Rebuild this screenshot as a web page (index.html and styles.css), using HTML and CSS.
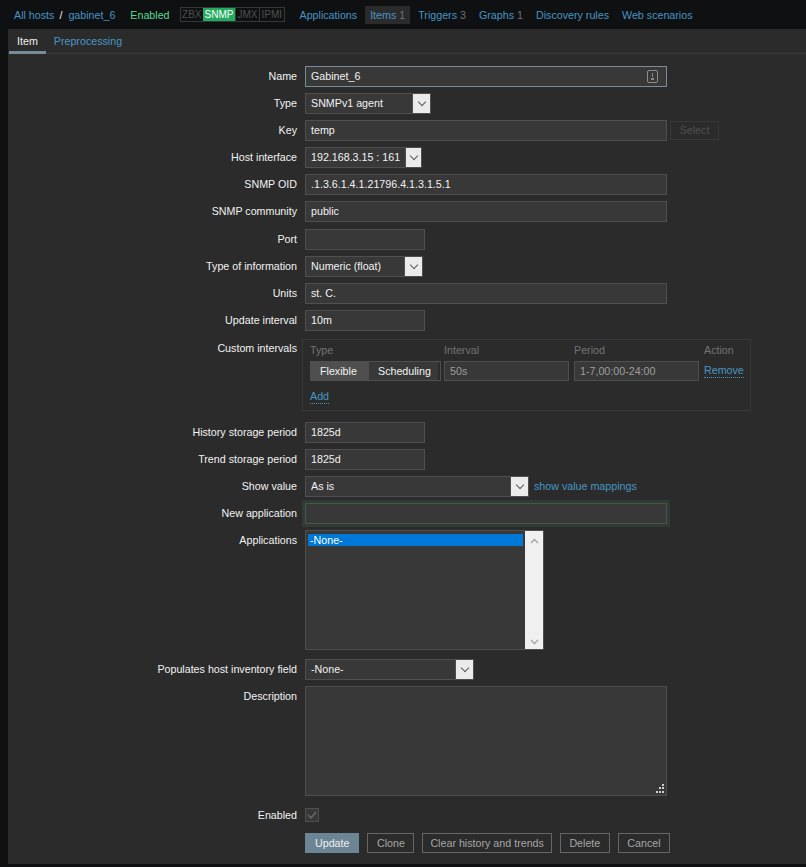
FILE: index.html
```html
<!DOCTYPE html>
<html lang="en">
<head>
    <meta charset="UTF-8">
    <meta name="viewport" content="width=device-width, initial-scale=1.0">
    <title>Configuration of items</title>
    <link rel="stylesheet" href="styles.css">
</head>
<body>
    <div class="host-nav">
        <a href="#" class="link">All hosts</a>
        <span class="sep">/</span>
        <a href="#" class="link">gabinet_6</a>
        <span class="status-on">Enabled</span>
        <span class="status-box">
            <span class="badge">ZBX</span><span class="badge badge-on">SNMP</span><span class="badge">JMX</span><span class="badge">IPMI</span>
        </span>
        <ul class="host-menu">
            <li><a href="#">Applications</a></li>
            <li class="selected"><a href="#">Items</a> <span class="count">1</span></li>
            <li><a href="#">Triggers</a> <span class="count">3</span></li>
            <li><a href="#">Graphs</a> <span class="count">1</span></li>
            <li><a href="#">Discovery rules</a></li>
            <li><a href="#">Web scenarios</a></li>
        </ul>
    </div>

    <div class="panel">
        <ul class="tabs">
            <li class="active">Item</li>
            <li><a href="#">Preprocessing</a></li>
        </ul>

        <form class="form-grid">
            <label>Name</label>
            <div class="field">
                <div class="input wide focused">Gabinet_6
                    <svg class="autofill" width="11" height="13" viewBox="0 0 11 13">
                        <rect x="0.5" y="0.5" width="10" height="12" rx="1.5" fill="none" stroke="#8c8c8c"/>
                        <rect x="5" y="3" width="1" height="4" fill="#8c8c8c"/>
                        <rect x="4" y="8" width="3" height="2" fill="#8c8c8c"/>
                    </svg>
                </div>
            </div>

            <label>Type</label>
            <div class="field">
                <div class="select w-type"><span class="val">SNMPv1 agent</span><span class="arrow"></span></div>
            </div>

            <label>Key</label>
            <div class="field">
                <div class="input wide">temp</div>
                <button type="button" class="btn-disabled">Select</button>
            </div>

            <label>Host interface</label>
            <div class="field">
                <div class="select w-iface"><span class="val">192.168.3.15 : 161</span><span class="arrow"></span></div>
            </div>

            <label>SNMP OID</label>
            <div class="field"><div class="input wide">.1.3.6.1.4.1.21796.4.1.3.1.5.1</div></div>

            <label>SNMP community</label>
            <div class="field"><div class="input wide">public</div></div>

            <label>Port</label>
            <div class="field"><div class="input small"></div></div>

            <label>Type of information</label>
            <div class="field">
                <div class="select w-info"><span class="val">Numeric (float)</span><span class="arrow"></span></div>
            </div>

            <label>Units</label>
            <div class="field"><div class="input wide">st. C.</div></div>

            <label>Update interval</label>
            <div class="field"><div class="input small">10m</div></div>

            <label class="top iv-label">Custom intervals</label>
            <div class="field">
                <div class="intervals">
                    <div class="iv-head">Type</div>
                    <div class="iv-head">Interval</div>
                    <div class="iv-head">Period</div>
                    <div class="iv-head">Action</div>

                    <div class="segmented">
                        <span class="seg active">Flexible</span><span class="seg">Scheduling</span>
                    </div>
                    <div class="input iv-input">50s</div>
                    <div class="input iv-input">1-7,00:00-24:00</div>
                    <a href="#" class="link dotted">Remove</a>

                    <a href="#" class="link dotted iv-add">Add</a>
                </div>
            </div>

            <label>History storage period</label>
            <div class="field"><div class="input small">1825d</div></div>

            <label>Trend storage period</label>
            <div class="field"><div class="input small">1825d</div></div>

            <label>Show value</label>
            <div class="field">
                <div class="select w-show"><span class="val">As is</span><span class="arrow"></span></div>
                <a href="#" class="link show-map">show value mappings</a>
            </div>

            <label>New application</label>
            <div class="field"><div class="input wide new-app"></div></div>

            <label class="top">Applications</label>
            <div class="field">
                <div class="listbox">
                    <div class="options">
                        <div class="option selected">-None-</div>
                    </div>
                    <div class="scrollbar">
                        <svg width="9" height="6" viewBox="0 0 9 6"><polyline points="1,5 4.5,1.5 8,5" fill="none" stroke="#a3a3a3" stroke-width="1.3"/></svg>
                        <svg width="9" height="6" viewBox="0 0 9 6"><polyline points="1,1 4.5,4.5 8,1" fill="none" stroke="#a3a3a3" stroke-width="1.3"/></svg>
                    </div>
                </div>
            </div>

            <label>Populates host inventory field</label>
            <div class="field">
                <div class="select w-inv"><span class="val">-None-</span><span class="arrow"></span></div>
            </div>

            <label class="top">Description</label>
            <div class="field">
                <div class="textarea">
                    <svg class="grip" width="9" height="9" viewBox="0 0 9 9" fill="#d0d0d0">
                        <rect x="7" y="0" width="2" height="2"/>
                        <rect x="4" y="3" width="2" height="2"/><rect x="7" y="3" width="2" height="2"/>
                        <rect x="1" y="7" width="2" height="2"/><rect x="4" y="7" width="2" height="2"/><rect x="7" y="7" width="2" height="2"/>
                    </svg>
                </div>
            </div>

            <label>Enabled</label>
            <div class="field">
                <span class="checkbox">
                    <svg width="10" height="8" viewBox="0 0 10 8"><polyline points="1,4 4,7 9,1" fill="none" stroke="#6b6b6b" stroke-width="1.3"/></svg>
                </span>
            </div>

            <div></div>
            <div class="field buttons">
                <button type="button" class="btn-main">Update</button>
                <button type="button" class="btn-alt">Clone</button>
                <button type="button" class="btn-alt btn-long">Clear history and trends</button>
                <button type="button" class="btn-alt">Delete</button>
                <button type="button" class="btn-alt">Cancel</button>
            </div>
        </form>
    </div>
</body>
</html>
```

FILE: styles.css
```css
body {
    margin: 0;
    background-color: #0e1012;
    font-family: "Liberation Sans", Arial, sans-serif;
    font-size: 10.7px;
    color: #f2f2f2;
}
a {
    text-decoration: none;
}
.link {
    color: #4796c4;
}
.dotted {
    border-bottom: 1px dotted #4796c4;
}

/* host navigation */
.host-nav {
    height: 29px;
    display: flex;
    align-items: center;
    padding-left: 14px;
}
.host-nav .sep {
    margin: 0 6px 0 5px;
    color: #f2f2f2;
}
.status-on {
    color: #59db8f;
    margin-left: 15px;
}
.status-box {
    display: flex;
    margin-left: 10px;
    border: 1px solid #383838;
    height: 13px;
}
.badge {
    color: #4f4f4f;
    padding: 0 1.5px;
    line-height: 13px;
    border-left: 1px solid #383838;
    font-size: 10px;
}
.badge:first-child {
    border-left: none;
}
.badge-on {
    background-color: #22aa5e;
    color: #ffffff;
    border-left: none;
}
.host-menu {
    list-style: none;
    margin: 0 0 0 10px;
    padding: 0;
    display: flex;
    gap: 3px;
}
.host-menu li {
    padding: 3px 5px;
    line-height: 12px;
}
.host-menu a {
    color: #4796c4;
}
.host-menu .selected {
    background-color: #2b2b2b;
}
.host-menu .count {
    color: #737373;
}

/* main panel */
.panel {
    margin-left: 8px;
    background-color: #2b2b2b;
    padding-bottom: 11px;
}
.tabs {
    list-style: none;
    margin: 0;
    padding: 0 0 0 1px;
    display: flex;
    height: 24px;
    border-bottom: 1px solid #3b3b3b;
}
.tabs li {
    padding: 0 8px;
    line-height: 25px;
    margin-bottom: -1px;
}
.tabs li.active {
    color: #f2f2f2;
    border-bottom: 3px solid #768d99;
    height: 22px;
}
.tabs a {
    color: #4796c4;
}

/* form */
.form-grid {
    display: grid;
    grid-template-columns: 289px 1fr;
    column-gap: 8px;
    row-gap: 6.2px;
    padding-top: 11.5px;
}
.form-grid > label {
    text-align: right;
    line-height: 21px;
    height: 21px;
    white-space: nowrap;
}
.form-grid > label.top {
    align-self: start;
}
.form-grid > label.iv-label {
    margin-top: 1px;
}
.field {
    display: flex;
    align-items: center;
    gap: 3px;
    min-height: 21px;
}
.input {
    position: relative;
    box-sizing: border-box;
    height: 21px;
    line-height: 19px;
    padding: 0 5px;
    background-color: #383838;
    border: 1px solid #4f4f4f;
    color: #f2f2f2;
    white-space: nowrap;
}
.input.wide {
    width: 362px;
}
.input.small {
    width: 120px;
}
.input.focused {
    border-color: #768d99;
}
.autofill {
    position: absolute;
    right: 8px;
    top: 3px;
}
.new-app {
    border-color: #46564b;
    box-shadow: 0 0 0 3px #303b34;
}
.select {
    box-sizing: border-box;
    height: 21px;
    display: flex;
    background-color: #383838;
    border: 1px solid #4f4f4f;
}
.select .val {
    flex: 1;
    padding: 0 5px;
    line-height: 19px;
    white-space: nowrap;
}
.select .arrow {
    width: 17px;
    background-color: #ebebeb;
    border-left: 1px solid #4f4f4f;
    display: flex;
    align-items: center;
    justify-content: center;
}
.select .arrow::after {
    content: "";
    width: 5px;
    height: 5px;
    border-right: 1px solid #5a5a5a;
    border-bottom: 1px solid #5a5a5a;
    transform: rotate(45deg);
    margin-top: -3px;
}
.w-type { width: 126px; }
.w-iface { width: 117px; }
.w-info { width: 118px; }
.w-show { width: 224px; }
.w-inv { width: 169px; }
.show-map {
    margin-left: 2px;
}

.btn-disabled {
    height: 19px;
    width: 49px;
    background: transparent;
    border: 1px solid #383838;
    color: #4f4f4f;
    font-family: inherit;
    font-size: inherit;
    padding: 0;
}

/* custom intervals */
.intervals {
    margin: 2px 0 4px -3px;
    box-sizing: border-box;
    width: 449px;
    border: 1px solid #383838;
    padding: 3px 8px 6px 7px;
    display: grid;
    grid-template-columns: 134px 130px 130px auto;
    row-gap: 3px;
    align-items: center;
}
.iv-head {
    color: #737373;
    line-height: 15px;
}
.segmented {
    display: flex;
    box-sizing: border-box;
    width: 131px;
    height: 20px;
    border: 1px solid #4f4f4f;
}
.seg {
    line-height: 18px;
    padding: 0 7px 0 9px;
    background-color: #383838;
}
.seg.active {
    background-color: #4f4f4f;
    padding: 0 9px;
    width: 40px;
}
.iv-input {
    width: 125px;
    height: 20px;
    line-height: 18px;
    color: #9e9e9e;
}
.intervals .dotted {
    justify-self: start;
    line-height: 13px;
}
.iv-add {
    grid-column: 1;
    margin-top: 6px;
}

/* applications list */
.listbox {
    box-sizing: border-box;
    width: 239px;
    height: 120px;
    margin-bottom: 2px;
    border: 1px solid #4f4f4f;
    background-color: #383838;
    display: flex;
}
.options {
    flex: 1;
    padding: 3px 2px;
}
.option {
    line-height: 12px;
    padding: 0 2px;
}
.option.selected {
    background-color: #0078d7;
    color: #ffffff;
}
.scrollbar {
    width: 18px;
    background-color: #f0f0f0;
    display: flex;
    flex-direction: column;
    justify-content: space-between;
    align-items: center;
    padding: 7px 0 4px;
    box-sizing: border-box;
}

.textarea {
    position: relative;
    box-sizing: border-box;
    width: 362px;
    height: 110px;
    margin-bottom: 3px;
    background-color: #383838;
    border: 1px solid #4f4f4f;
}
.grip {
    position: absolute;
    right: 2px;
    bottom: 2px;
}

.checkbox {
    box-sizing: border-box;
    width: 14px;
    height: 14px;
    border: 1px solid #4f4f4f;
    background-color: #383838;
    display: flex;
    align-items: center;
    justify-content: center;
}

/* buttons */
.buttons {
    gap: 8px;
}
.buttons button {
    height: 20px;
    padding: 0 8.5px;
    font-family: inherit;
    font-size: inherit;
    cursor: pointer;
}
.btn-main {
    background-color: #6b8595;
    border: 1px solid #6b8595;
    color: #f0f0f0;
}
.buttons .btn-main {
    padding: 0 9px;
}
.buttons .btn-long {
    padding: 0 7px;
}
.btn-alt {
    background: transparent;
    border: 1px solid #666666;
    color: #a6a6a6;
}
```
